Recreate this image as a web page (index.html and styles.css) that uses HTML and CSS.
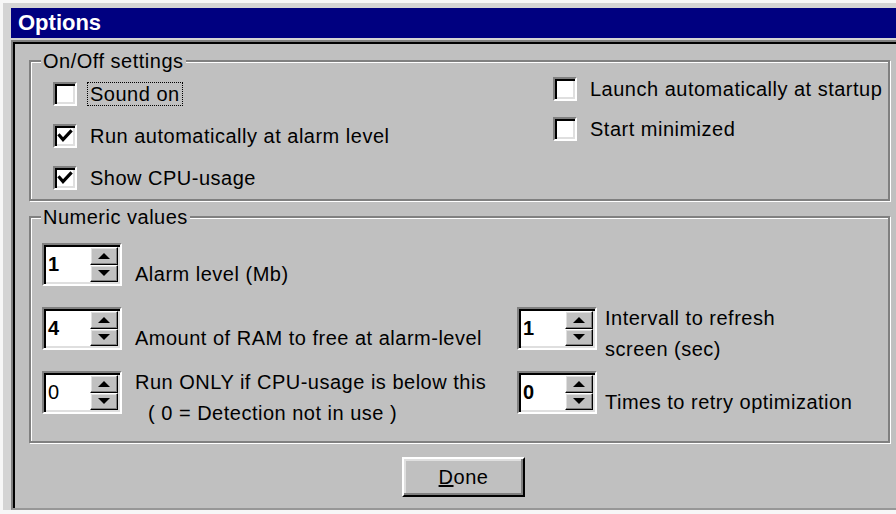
FILE: index.html
```html
<!DOCTYPE html>
<html lang="en">
<head>
<meta charset="utf-8">
<title>Options</title>
<link rel="stylesheet" href="styles.css">
</head>
<body>
<div class="window">
  <div class="titlebar">Options</div>
  <div class="client">

    <div class="group group-switches">
      <span class="group-title">On/Off settings</span>
      <div class="switch-grid">
        <div class="col col-left">
          <label class="check">
            <span class="box"></span>
            <span class="text focus">Sound on</span>
          </label>
          <label class="check">
            <span class="box"><svg class="tick" viewBox="0 0 16 16"><polyline points="2.5,7.5 6,11.5 13.5,3.5"/></svg></span>
            <span class="text">Run automatically at alarm level</span>
          </label>
          <label class="check">
            <span class="box"><svg class="tick" viewBox="0 0 16 16"><polyline points="2.5,7.5 6,11.5 13.5,3.5"/></svg></span>
            <span class="text">Show CPU-usage</span>
          </label>
        </div>
        <div class="col col-right">
          <label class="check">
            <span class="box"></span>
            <span class="text">Launch automatically at startup</span>
          </label>
          <label class="check">
            <span class="box"></span>
            <span class="text">Start minimized</span>
          </label>
        </div>
      </div>
    </div>

    <div class="group group-numbers">
      <span class="group-title">Numeric values</span>
      <div class="num-grid">
        <div class="spin-row">
          <div class="spin">
            <span class="spin-value">1</span>
            <span class="spin-buttons">
              <span class="spin-btn"><svg class="arrow" viewBox="0 0 12 6"><path d="M6 0L12 6H0Z"/></svg></span>
              <span class="spin-btn"><svg class="arrow" viewBox="0 0 12 6"><path d="M0 0H12L6 6Z"/></svg></span>
            </span>
          </div>
          <span class="num-label">Alarm level (Mb)</span>
        </div>
        <div></div>

        <div class="spin-row">
          <div class="spin">
            <span class="spin-value">4</span>
            <span class="spin-buttons">
              <span class="spin-btn"><svg class="arrow" viewBox="0 0 12 6"><path d="M6 0L12 6H0Z"/></svg></span>
              <span class="spin-btn"><svg class="arrow" viewBox="0 0 12 6"><path d="M0 0H12L6 6Z"/></svg></span>
            </span>
          </div>
          <span class="num-label">Amount of RAM to free at alarm-level</span>
        </div>
        <div class="spin-row right">
          <div class="spin">
            <span class="spin-value">1</span>
            <span class="spin-buttons">
              <span class="spin-btn"><svg class="arrow" viewBox="0 0 12 6"><path d="M6 0L12 6H0Z"/></svg></span>
              <span class="spin-btn"><svg class="arrow" viewBox="0 0 12 6"><path d="M0 0H12L6 6Z"/></svg></span>
            </span>
          </div>
          <span class="num-label two-line">Intervall to refresh<br>screen (sec)</span>
        </div>

        <div class="spin-row">
          <div class="spin">
            <span class="spin-value plain">0</span>
            <span class="spin-buttons">
              <span class="spin-btn"><svg class="arrow" viewBox="0 0 12 6"><path d="M6 0L12 6H0Z"/></svg></span>
              <span class="spin-btn"><svg class="arrow" viewBox="0 0 12 6"><path d="M0 0H12L6 6Z"/></svg></span>
            </span>
          </div>
          <span class="num-label two-line">Run ONLY if CPU-usage is below this<br><span class="indent">( 0 = Detection not in use )</span></span>
        </div>
        <div class="spin-row right">
          <div class="spin">
            <span class="spin-value">0</span>
            <span class="spin-buttons">
              <span class="spin-btn"><svg class="arrow" viewBox="0 0 12 6"><path d="M6 0L12 6H0Z"/></svg></span>
              <span class="spin-btn"><svg class="arrow" viewBox="0 0 12 6"><path d="M0 0H12L6 6Z"/></svg></span>
            </span>
          </div>
          <span class="num-label">Times to retry optimization</span>
        </div>
      </div>
    </div>

    <div class="actions">
      <button class="btn" type="button"><span class="mnemonic">D</span>one</button>
    </div>

  </div>
</div>
</body>
</html>
```
FILE: styles.css
```css
* {
  box-sizing: border-box;
}

html,
body {
  margin: 0;
  padding: 0;
}

body {
  width: 896px;
  height: 514px;
  overflow: hidden;
  background: #f7f7f7;
  font-family: "Liberation Sans", Arial, sans-serif;
  font-size: 20px;
  letter-spacing: 0.5px;
  color: #000;
}

/* dialog frame */
.window {
  margin: 3px 0 0 3px;
  padding: 5px 0 0 8px;
  background: #d4d4d4;
}

.titlebar {
  height: 30px;
  line-height: 30px;
  padding-left: 7px;
  background: #000080;
  color: #fff;
  font-size: 22px;
  font-weight: bold;
  letter-spacing: 0;
}

.client {
  margin-top: 2px;
  padding: 18px 6px 11px 16px;
  background: #c0c0c0;
  border-top: 2px solid #808080;
  border-left: 2px solid #808080;
  border-bottom: 2px solid #979797;
  box-shadow: inset 2px 2px 0 #000;
}

/* etched group boxes */
.group {
  position: relative;
  border: 2px solid #808080;
  box-shadow: inset 1px 1px 0 #fff, 1px 1px 0 #fff;
}

.group-title {
  position: absolute;
  top: -12px;
  left: 10px;
  padding: 0 2px;
  line-height: 22px;
  background: #c0c0c0;
  white-space: nowrap;
}

.group-numbers {
  margin-top: 15px;
}

/* check boxes */
.switch-grid {
  display: grid;
  grid-template-columns: 500px 1fr;
  padding: 20px 0 9px 22px;
}

.col {
  display: flex;
  flex-direction: column;
}

.col-left {
  gap: 18px;
}

.col-right {
  gap: 16px;
  margin-top: -5px;
}

.check {
  display: flex;
  align-items: center;
  height: 24px;
}

.box {
  flex: none;
  width: 24px;
  height: 24px;
  padding: 2px;
  background: #fff;
  border: 2px solid;
  border-color: #808080 #fff #fff #808080;
  box-shadow: inset 2px 2px 0 #000, inset -2px -2px 0 #dfdfdf;
}

.tick {
  display: block;
  width: 16px;
  height: 16px;
}

.tick polyline {
  fill: none;
  stroke: #000;
  stroke-width: 3.2;
  stroke-linecap: square;
  stroke-linejoin: miter;
}

.text {
  margin-left: 10px;
  padding: 0 2px;
  line-height: 22px;
  border: 1px dotted transparent;
  white-space: nowrap;
}

.text.focus {
  border-color: #000;
}

/* spin boxes */
.num-grid {
  display: grid;
  grid-template-columns: 475px 1fr;
  row-gap: 21px;
  padding: 25px 0 27px 11px;
}

.spin-row {
  display: flex;
  align-items: flex-start;
  height: 43px;
}

.spin {
  flex: none;
  display: flex;
  width: 80px;
  height: 43px;
  padding: 2px;
  background: #fff;
  border: 2px solid;
  border-color: #808080 #fff #fff #808080;
  box-shadow: inset 2px 2px 0 #000, inset -2px -2px 0 #dfdfdf;
}

.spin-value {
  flex: 1;
  padding-left: 2px;
  line-height: 35px;
  font-weight: bold;
}

.spin-value.plain {
  font-weight: normal;
}

.spin-buttons {
  flex: none;
  display: flex;
  flex-direction: column;
  width: 28px;
}

.spin-btn {
  flex: 1;
  display: flex;
  align-items: center;
  justify-content: center;
  background: #c0c0c0;
  border: 1px solid;
  border-color: #fff #000 #000 #fff;
  box-shadow: inset -1px -1px 0 #808080, inset 1px 1px 0 #dfdfdf;
}

.arrow {
  display: block;
  width: 12px;
  height: 6px;
}

.arrow path {
  fill: #000;
}

.num-label {
  margin: 20px 0 0 13px;
  line-height: 22px;
  white-space: nowrap;
}

.right .num-label {
  margin-left: 8px;
}

.num-label.two-line {
  margin-top: -4px;
  line-height: 31px;
}

.indent {
  padding-left: 13px;
}

/* command button */
.actions {
  display: flex;
  justify-content: center;
  margin-top: 14px;
  padding-left: 8px;
}

.btn {
  width: 123px;
  height: 40px;
  padding: 0;
  background: #c0c0c0;
  border: 2px solid;
  border-color: #fff #000 #000 #fff;
  box-shadow: inset -2px -2px 0 #808080, inset 2px 2px 0 #dfdfdf;
  font: inherit;
  letter-spacing: 0.5px;
  color: #000;
}

.mnemonic {
  text-decoration: underline;
}
```
